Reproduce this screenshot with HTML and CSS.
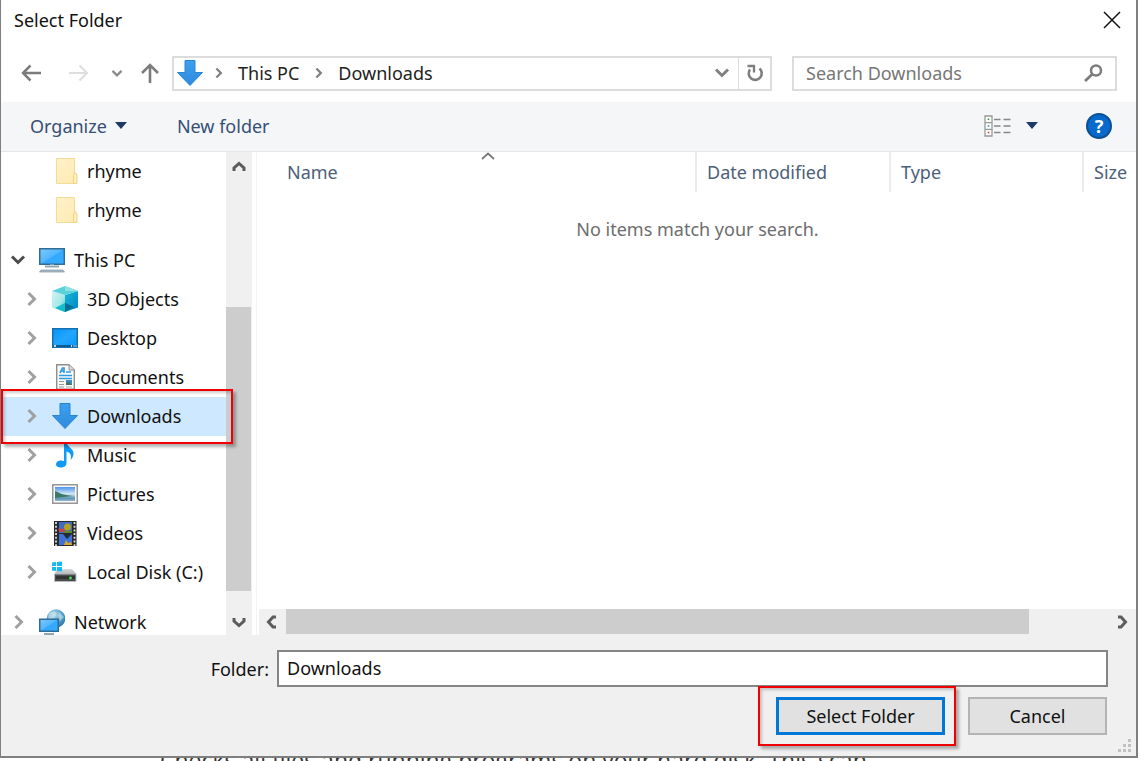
FILE: index.html
```html
<!DOCTYPE html>
<html lang="en">
<head>
<meta charset="utf-8">
<title>Select Folder</title>
<link rel="stylesheet" href="styles.css">
</head>
<body>
<svg class="defs" aria-hidden="true">
  <defs>
    <linearGradient id="blue" x1="0" y1="0" x2="1" y2="1"><stop offset="0" stop-color="#7cc8ff"/><stop offset=".5" stop-color="#52b6ff"/><stop offset=".52" stop-color="#32a8ff"/><stop offset="1" stop-color="#36acff"/></linearGradient>
    <linearGradient id="desk" x1="0" y1="0" x2="1" y2="1"><stop offset="0" stop-color="#0594f8"/><stop offset=".5" stop-color="#22a6ff"/><stop offset="1" stop-color="#0496fb"/></linearGradient>
    <linearGradient id="arrow" x1="0" y1="0" x2="0" y2="1"><stop offset="0" stop-color="#3ba0f0"/><stop offset="1" stop-color="#2f8ade"/></linearGradient>
    <linearGradient id="folder" x1="0" y1="0" x2="1" y2="1"><stop offset="0" stop-color="#fff2cb"/><stop offset="1" stop-color="#ffeab0"/></linearGradient>
    <linearGradient id="cube-l" x1="0" y1="0" x2="1" y2="1"><stop offset="0" stop-color="#d3f3f2"/><stop offset=".6" stop-color="#a5e8ea"/><stop offset="1" stop-color="#20c6d2"/></linearGradient>
    <linearGradient id="cube-r" x1="0" y1="0" x2="1" y2="1"><stop offset="0" stop-color="#18b5d8"/><stop offset="1" stop-color="#0087c4"/></linearGradient>
    <linearGradient id="sky" x1="0" y1="0" x2="0" y2="1"><stop offset="0" stop-color="#4d94e8"/><stop offset=".5" stop-color="#d3e9f7"/><stop offset=".8" stop-color="#5d93b0"/><stop offset="1" stop-color="#8fb8d4"/></linearGradient>
    <linearGradient id="disk" x1="0" y1="0" x2="0" y2="1"><stop offset="0" stop-color="#d8d8da"/><stop offset="1" stop-color="#b5b6b9"/></linearGradient>
    <radialGradient id="globe" cx=".4" cy=".3" r=".8"><stop offset="0" stop-color="#b6dcec"/><stop offset=".5" stop-color="#5aa5cb"/><stop offset="1" stop-color="#226a9c"/></radialGradient>
    <symbol id="i-chev" viewBox="0 0 12 16"><path d="M2.500 2 8.500 8 2.500 14" fill="none" stroke="currentColor" stroke-width="3"/></symbol>
    <symbol id="i-down" viewBox="0 0 16 12"><path d="M2 2.500 8 8.500 14 2.500" fill="none" stroke="currentColor" stroke-width="3"/></symbol>
    <symbol id="i-caret" viewBox="0 0 12 7"><path d="M0 0H12L6 7Z" fill="#1e3a66"/></symbol>
    <symbol id="i-download" viewBox="0 0 26 26"><path d="M8 .5H18V12.500H25.500L13 25.500.5 12.500H8Z" fill="url(#arrow)" stroke="#2b84d0" stroke-width="1"/></symbol>
    <symbol id="i-folder" viewBox="0 0 26 26"><path d="M4.500 .5H22.500V15L24.500 16V25.500H4.500Z" fill="url(#folder)" stroke="#f3dc98"/><path d="M21.500 25.500V17L23 14.500 25 17V25.500Z" fill="#ffeeb9" stroke="#eed48b"/></symbol>
    <symbol id="i-pc" viewBox="0 0 26 26"><rect x=".75" y="1.750" width="24.500" height="15.500" fill="url(#blue)" stroke="#326d96" stroke-width="1.500"/><path d="M6 19.500H20" stroke="#8ea5b2" stroke-width="2"/><path d="M11 18H15" stroke="#c4d4dc"/><path d="M.5 25 2 23H24L25.500 25Z" fill="#a9bac5" stroke="#8295a2" stroke-width=".7"/></symbol>
    <symbol id="i-cube" viewBox="0 0 26 26"><path d="M0 5 13 9V26L0 21.500Z" fill="url(#cube-l)"/><path d="M26 5 13 9V26L26 21.500Z" fill="url(#cube-r)"/><path d="M13 0 26 5 13 9 0 5Z" fill="#5ad0d8"/><path d="M13 0 26 5 13 5Z" fill="#8ce1e3"/><path d="M13 17 22 21 13 26Z" fill="#006d91"/><path d="M13 17V26L3 22Z" fill="#12bccb"/></symbol>
    <symbol id="i-desktop" viewBox="0 0 26 26"><rect x=".75" y="3.750" width="24.500" height="18.500" fill="url(#desk)" stroke="#176fb0" stroke-width="1.500"/><path d="M1 21H25" stroke="#0b5b94" stroke-width="2"/><path d="M2 21H4M19 21H20M21.500 21H22.500M23.500 21H24.500" stroke="#fff" stroke-width="1.500"/></symbol>
    <symbol id="i-doc" viewBox="0 0 26 26"><path d="M4.700 .7H17L22.300 6V25.300H4.700Z" fill="#fafafa" stroke="#8e8e8e" stroke-width="1.400"/><path d="M17 .7V6H22.300" fill="#ddd" stroke="#8e8e8e"/><path d="M8 9 10.500 4H12V9M9 7H12M14 8H19M7 11.500H20M7 14.500H20" fill="none" stroke="#2e9be4" stroke-width="1.700"/><path d="M7 17.500H12M7 20.500H12M7 23H12" stroke="#999" stroke-width="1.200"/><rect x="14" y="16" width="6" height="5" fill="#3e8cc0"/><path d="M14 19 17 18 20 21H14Z" fill="#3d7763"/><path d="M14 23H20" stroke="#aaa"/></symbol>
    <symbol id="i-music" viewBox="0 0 26 26"><path d="M12 0H14.500C15 5 21.500 6.500 21.500 11.500 21.500 14.500 20 16.500 18.500 18 20 13 18 10.500 14.500 9.500V21C14.500 24 12 25.500 8.500 25.500 6 25.500 4 24.500 4 22.500 4 19 8.500 17.500 12 19Z" fill="#0d9bf7"/></symbol>
    <symbol id="i-pic" viewBox="0 0 26 26"><rect x=".75" y="3.750" width="24.500" height="18.500" fill="#fafafa" stroke="#969696" stroke-width="1.500"/><rect x="3" y="6" width="20" height="14" fill="url(#sky)"/><path d="M3 10C8 12 10 14 21 15L12 16 3 17Z" fill="#3b7867"/></symbol>
    <symbol id="i-video" viewBox="0 0 26 26"><rect x="2" y="1" width="22.500" height="25" fill="#292929"/><path d="M4 2V26M22.500 2V26" stroke="#ddd" stroke-width="1.800" stroke-dasharray="2 1.700"/><rect x="7" y="2" width="13" height="11" fill="#426bc4"/><path d="M6.500 8 12 9 15 12H7Z" fill="#bd4a50"/><circle cx="15.500" cy="7" r="3.500" fill="#b6a31f"/><path d="M12 12H20" stroke="#5b8c24" stroke-width="2"/><rect x="7" y="14" width="13" height="11" fill="#3f72d4"/><path d="M11 14H20L15 19Z" fill="#242a37"/><path d="M12 25 14 20 16 23 19 22 20 25Z" fill="#dba92c"/></symbol>
    <symbol id="i-disk" viewBox="0 0 26 26"><path d="M5 10H20L24.500 15H2.500Z" fill="url(#disk)"/><path d="M2.500 15H24V22.500H2.500Z" fill="#4a4c4e" stroke="#b8babb"/><path d="M4 18.500H23" stroke="#333" stroke-width="3"/><circle cx="18.500" cy="19" r="1.400" fill="#3ee45a"/><path d="M0 3.500 4 3V7H0ZM5 2.900 10 2.500V7H5ZM0 8H4V12L0 11.500ZM5 8H10V12.500L5 12.100Z" fill="#12b9f6"/></symbol>
    <symbol id="i-net" viewBox="0 0 26 26"><circle cx="17" cy="9.500" r="9.300" fill="url(#globe)"/><path d="M10 4 15 2 18 5 14 10 9 10ZM20 3 25 8 21 12 19 7Z" fill="#d3e9ee" opacity=".55"/><rect x=".75" y="10.250" width="18.500" height="12" fill="url(#blue)" stroke="#2f6c97" stroke-width="1.500"/><path d="M5 25H15" stroke="#8ea5b2" stroke-width="2"/></symbol>
  </defs>
</svg>

<main class="dialog">
  <header class="titlebar">
    <h1 class="title">Select Folder</h1>
    <button class="icon-btn close" aria-label="Close"><svg width="18" height="18" viewBox="0 0 18 18"><path d="M1 1 17 17M17 1 1 17" stroke="#111" stroke-width="1.500"/></svg></button>
  </header>

  <nav class="navbar">
    <div class="history">
      <button class="icon-btn" aria-label="Back"><svg width="20" height="18" viewBox="0 0 20 18"><path d="M1.500 9H20M9.500 1.500 2 9 9.500 16.500" fill="none" stroke="#7c7c7c" stroke-width="2.500"/></svg></button>
      <button class="icon-btn forward" aria-label="Forward"><svg width="20" height="18" viewBox="0 0 20 18"><path d="M0 9H18.500M10.500 1.500 18 9 10.500 16.500" fill="none" stroke="#dedede" stroke-width="2.200"/></svg></button>
      <button class="icon-btn recent" aria-label="Recent locations"><svg width="12" height="9"><use href="#i-down"/></svg></button>
      <button class="icon-btn" aria-label="Up"><svg width="18" height="20" viewBox="0 0 18 20"><path d="M9 2V20M1 10 9 2 17 10" fill="none" stroke="#7c7c7c" stroke-width="2.600"/></svg></button>
    </div>
    <div class="address">
      <svg class="place" width="26" height="26"><use href="#i-download"/></svg>
      <svg class="crumb-sep" width="10" height="12"><use href="#i-chev"/></svg>
      <a class="crumb" href="#">This PC</a>
      <svg class="crumb-sep" width="10" height="12"><use href="#i-chev"/></svg>
      <a class="crumb" href="#">Downloads</a>
      <button class="icon-btn drop" aria-label="Previous locations"><svg width="16" height="12"><use href="#i-down"/></svg></button>
      <button class="icon-btn refresh" aria-label="Refresh"><svg width="18" height="19" viewBox="0 0 18 19"><path d="M13.500 4.500A6.500 6.500 0 1 1 4 5.500" fill="none" stroke="#7f7f7f" stroke-width="2.600"/><path d="M1.500 2H8V8.500" fill="none" stroke="#7f7f7f" stroke-width="2.300"/></svg></button>
    </div>
    <div class="search">
      <input class="search-input" type="text" placeholder="Search Downloads" aria-label="Search Downloads">
      <svg width="19" height="18" viewBox="0 0 19 18"><circle cx="12" cy="6.500" r="5" fill="none" stroke="#7c7c7c" stroke-width="2.500"/><path d="M8.500 10 1 17" stroke="#7c7c7c" stroke-width="2.800"/></svg>
    </div>
  </nav>

  <div class="toolbar">
    <button class="tool organize">Organize <svg width="12" height="7"><use href="#i-caret"/></svg></button>
    <button class="tool">New folder</button>
    <button class="icon-btn view" aria-label="Change view"><svg width="27" height="22" viewBox="0 0 27 22"><path d="M1 1H8V21H1ZM1 7.700H8M1 14.300H8" fill="#fff" stroke="#999" stroke-width="1.300"/><path d="M3.700 4.300H5.300" stroke="#2a8d4a" stroke-width="1.600"/><path d="M3.700 11H5.300" stroke="#1e8af0" stroke-width="1.600"/><path d="M3.700 17.500H5.300" stroke="#e03030" stroke-width="1.600"/><path d="M10 4.500H16.500M19.500 4.500H26.500M10 11H16.500M19.500 11H26.500M10 17.500H16.500M19.500 17.500H26.500" stroke="#858a85" stroke-width="1.500"/></svg></button>
    <button class="icon-btn more" aria-label="More view options"><svg width="12" height="7"><use href="#i-caret"/></svg></button>
    <button class="help" aria-label="Help">?</button>
  </div>

  <div class="content">
    <ul class="tree">
      <li class="node child"><svg class="icon" width="26" height="26"><use href="#i-folder"/></svg>rhyme</li>
      <li class="node child"><svg class="icon" width="26" height="26"><use href="#i-folder"/></svg>rhyme</li>
      <li class="node root open"><svg class="twist" width="16" height="12"><use href="#i-down"/></svg><svg class="icon" width="26" height="26"><use href="#i-pc"/></svg>This PC</li>
      <li class="node child"><svg class="twist" width="12" height="16"><use href="#i-chev"/></svg><svg class="icon" width="26" height="26"><use href="#i-cube"/></svg>3D Objects</li>
      <li class="node child"><svg class="twist" width="12" height="16"><use href="#i-chev"/></svg><svg class="icon" width="26" height="26"><use href="#i-desktop"/></svg>Desktop</li>
      <li class="node child"><svg class="twist" width="12" height="16"><use href="#i-chev"/></svg><svg class="icon" width="26" height="26"><use href="#i-doc"/></svg>Documents</li>
      <li class="node child selected"><svg class="twist" width="12" height="16"><use href="#i-chev"/></svg><svg class="icon" width="26" height="26"><use href="#i-download"/></svg>Downloads<span class="callout callout-row"></span></li>
      <li class="node child"><svg class="twist" width="12" height="16"><use href="#i-chev"/></svg><svg class="icon" width="26" height="26"><use href="#i-music"/></svg>Music</li>
      <li class="node child"><svg class="twist" width="12" height="16"><use href="#i-chev"/></svg><svg class="icon" width="26" height="26"><use href="#i-pic"/></svg>Pictures</li>
      <li class="node child"><svg class="twist" width="12" height="16"><use href="#i-chev"/></svg><svg class="icon" width="26" height="26"><use href="#i-video"/></svg>Videos</li>
      <li class="node child"><svg class="twist" width="12" height="16"><use href="#i-chev"/></svg><svg class="icon" width="26" height="26"><use href="#i-disk"/></svg>Local Disk (C:)</li>
      <li class="node root"><svg class="twist" width="12" height="16"><use href="#i-chev"/></svg><svg class="icon" width="26" height="26"><use href="#i-net"/></svg>Network</li>
    </ul>
    <div class="vscroll">
      <svg width="14" height="12" viewBox="0 0 14 12"><path d="M2 10V7L7 2.500 12 7V10" fill="none" stroke="#5c5c5c" stroke-width="3"/></svg>
      <div class="vtrack"><div class="vthumb"></div></div>
      <svg width="14" height="12" viewBox="0 0 14 12"><path d="M2 2V5L7 9.500 12 5V2" fill="none" stroke="#5c5c5c" stroke-width="3"/></svg>
    </div>
    <section class="files">
      <table class="list">
        <thead>
          <tr>
            <th class="col-name">Name<svg class="sort" width="14" height="8" viewBox="0 0 14 8"><path d="M1 7 7 1.500 13 7" fill="none" stroke="#7a7a7a" stroke-width="1.800"/></svg></th>
            <th class="col-date">Date modified</th>
            <th class="col-type">Type</th>
            <th class="col-size">Size</th>
          </tr>
        </thead>
        <tbody><tr><td class="empty" colspan="4">No items match your search.</td></tr></tbody>
      </table>
      <div class="hscroll">
        <svg width="12" height="14" viewBox="0 0 12 14"><path d="M10 2H7L2.500 7 7 12H10" fill="none" stroke="#5c5c5c" stroke-width="3"/></svg>
        <div class="htrack"><div class="hthumb"></div></div>
        <svg width="12" height="14" viewBox="0 0 12 14"><path d="M2 2H5L9.500 7 5 12H2" fill="none" stroke="#5c5c5c" stroke-width="3"/></svg>
      </div>
    </section>
  </div>

  <footer class="footer">
    <div class="field">
      <label class="field-label" for="folder">Folder:</label>
      <input class="field-input" id="folder" type="text" value="Downloads">
    </div>
    <div class="actions">
      <div class="primary-wrap"><button class="btn primary">Select Folder</button><span class="callout callout-btn"></span></div>
      <button class="btn cancel">Cancel</button>
    </div>
    <svg class="grip" width="14" height="14" viewBox="0 0 14 14"><path d="M10 0h3v3h-3zM5 5h3v3H5zM10 5h3v3h-3zM0 10h3v3H0zM5 10h3v3H5zM10 10h3v3h-3z" fill="#c1c1c1"/></svg>
  </footer>
</main>
<div class="page-behind"><p class="page-text">Checks all files and running programs on your hard disk. This scan</p></div>
</body>
</html>
```

FILE: styles.css
```css
* { box-sizing: border-box; }

body {
  margin: 0;
  height: 100vh;
  display: flex;
  flex-direction: column;
  overflow: hidden;
  background: #fff;
  color: #111;
  font: 18px/24px "Noto Sans", "Open Sans", sans-serif;
}

svg { display: block; flex: none; }
.defs { position: absolute; width: 0; height: 0; }

button, input { font: inherit; color: inherit; }
button { padding: 0; border: 0; background: none; }

.icon-btn { display: flex; align-items: center; justify-content: center; flex: none; }

.dialog {
  flex: 1;
  min-height: 0;
  margin-right: 7px;
  display: flex;
  flex-direction: column;
  border: solid #7f7f7f;
  border-width: 0 2px 2px 1px;
}

/* Title */
.titlebar {
  display: flex;
  align-items: center;
  justify-content: space-between;
  height: 40px;
  padding: 0 15px 0 13px;
}
.title { margin: 0; font-size: 18px; font-weight: 400; }

/* Navigation */
.navbar {
  display: flex;
  align-items: center;
  height: 62px;
  padding: 4px 19px 0 20px;
}
.history { display: flex; align-items: center; width: 151px; color: #8a8a8a; }
.forward { margin-left: 28px; }
.recent { margin: 0 18px 0 22px; }
.address, .search {
  display: flex;
  align-items: center;
  height: 35px;
  border: 2px solid #dcdcdc;
  background: #fff;
}
.address { flex: 1; padding-left: 3px; color: #808080; }
.crumb { color: #222; text-decoration: none; }
.crumb-sep { margin: 0 14px 0 11px; }
.crumb + .crumb-sep { margin-left: 15px; }
.drop { width: 32px; height: 100%; margin-left: auto; }
.refresh { width: 32px; height: 100%; border-left: 1px solid #dcdcdc; }
.search { width: 325px; margin-left: 20px; padding: 0 12px; }
.search-input {
  flex: 1;
  min-width: 0;
  padding: 0;
  border: 0;
  outline: 0;
  background: none;
}
.search-input::placeholder { color: #767676; opacity: 1; }

/* Command bar */
.toolbar {
  display: flex;
  align-items: center;
  height: 50px;
  padding: 0 24px 2px 29px;
  background: #f4f6f8;
  border-bottom: 1px solid #e6e7e8;
  color: #364f76;
}
.organize { display: flex; align-items: center; gap: 8px; margin-right: 50px; }
.view { margin-left: auto; }
.more { margin: 0 48px 0 15px; }
.help {
  width: 26px;
  height: 26px;
  border: 2px solid #0b4f94;
  border-radius: 50%;
  background: #0869cc;
  color: #fff;
  font-weight: 700;
  line-height: 22px;
}

/* Folder tree */
.content { flex: 1; min-height: 0; display: flex; }
.tree {
  position: relative;
  z-index: 1;
  width: 225px;
  height: 100%;
  margin: 0;
  padding: 0;
  list-style: none;
  clip-path: inset(0 -20px 0 0);
}
.node {
  display: flex;
  align-items: center;
  height: 39px;
  padding-bottom: 2px;
  white-space: nowrap;
}
.root { padding-left: 12px; margin-top: 11px; }
.child { padding-left: 25px; }
.open { padding-left: 9px; }
.twist { color: #a0a0a0; margin-right: 14px; }
.open .twist { color: #4c4c4c; margin-right: 13px; }
.icon { margin-right: 9px; }
.node > .icon:first-child { margin-left: 26px; }
.selected {
  position: relative;
  background: #cde8ff;
  box-shadow: inset 2px 0 #fff;
}

.callout {
  position: absolute;
  border: 2px solid #f00000;
  box-shadow: 3px 3px 3px rgba(0, 0, 0, .3), inset 2px 2px 3px rgba(0, 0, 0, .2);
  pointer-events: none;
}
.callout-row { inset: -8px -7px -8px 0; }
.callout-btn { inset: -11px; left: -18px; }

/* Scroll bars */
.vscroll {
  display: flex;
  flex-direction: column;
  align-items: center;
  width: 26px;
  padding: 9px 0 7px;
  background: #f0f0f0;
}
.vtrack { flex: 1; width: 100%; display: flex; flex-direction: column; justify-content: flex-end; padding: 0 1px 25px 0; }
.vthumb { height: 68%; background: #cdcdcd; }
.hscroll { display: flex; align-items: center; height: 26px; padding: 0 8px 0 7px; background: #f0f0f0; }
.htrack { flex: 1; height: 100%; padding: 0 5px 1px 8px; }
.hthumb { width: 90%; height: 100%; background: #cdcdcd; }

/* File list */
.files {
  flex: 1;
  min-width: 0;
  display: flex;
  flex-direction: column;
  justify-content: space-between;
  margin-left: 4px;
  border-left: 1px solid #f3f3f3;
  padding-left: 2px;
}
.list { width: 100%; border-collapse: collapse; table-layout: fixed; color: #4c607a; }
.list th { position: relative; height: 40px; padding: 0 0 0 10px; font-weight: 400; text-align: left; white-space: nowrap; }
.list th + th { border-left: 2px solid #ececec; }
.list .col-name { padding-left: 28px; }
.col-date { width: 194px; }
.col-type { width: 193px; }
.col-size { width: 53px; }
.sort { position: absolute; top: 0; left: 51%; }
.list .empty { padding: 25px 0 0; text-align: center; color: #6d6d6d; }

/* Footer */
.footer { position: relative; padding: 15px 28px 21px; background: #f0f0f0; }
.field { display: flex; align-items: center; gap: 8px; padding-left: 180px; }
.field-label { flex: none; width: 60px; text-align: right; }
.field-input {
  flex: 1;
  min-width: 0;
  height: 37px;
  padding: 0 8px 2px;
  border: 2px solid #858585;
  outline: 0;
  background: #fff;
}
.actions { display: flex; justify-content: flex-end; gap: 23px; margin: 10px 1px 0 0; }
.primary-wrap { position: relative; }
.btn { height: 38px; border: 2px solid #b4b4b4; background: #e1e1e1; }
.primary { width: 169px; border: 3px solid #0078d7; display: block; }
.cancel { width: 139px; }
.grip { position: absolute; right: 4px; bottom: 3px; }

/* Page under the dialog */
.page-behind { height: 3px; display: flex; align-items: center; overflow: hidden; padding-left: 160px; }
.page-text { margin: 0; font-family: "Open Sans", sans-serif; font-size: 23px; line-height: 28px; white-space: nowrap; color: #333; }
```
